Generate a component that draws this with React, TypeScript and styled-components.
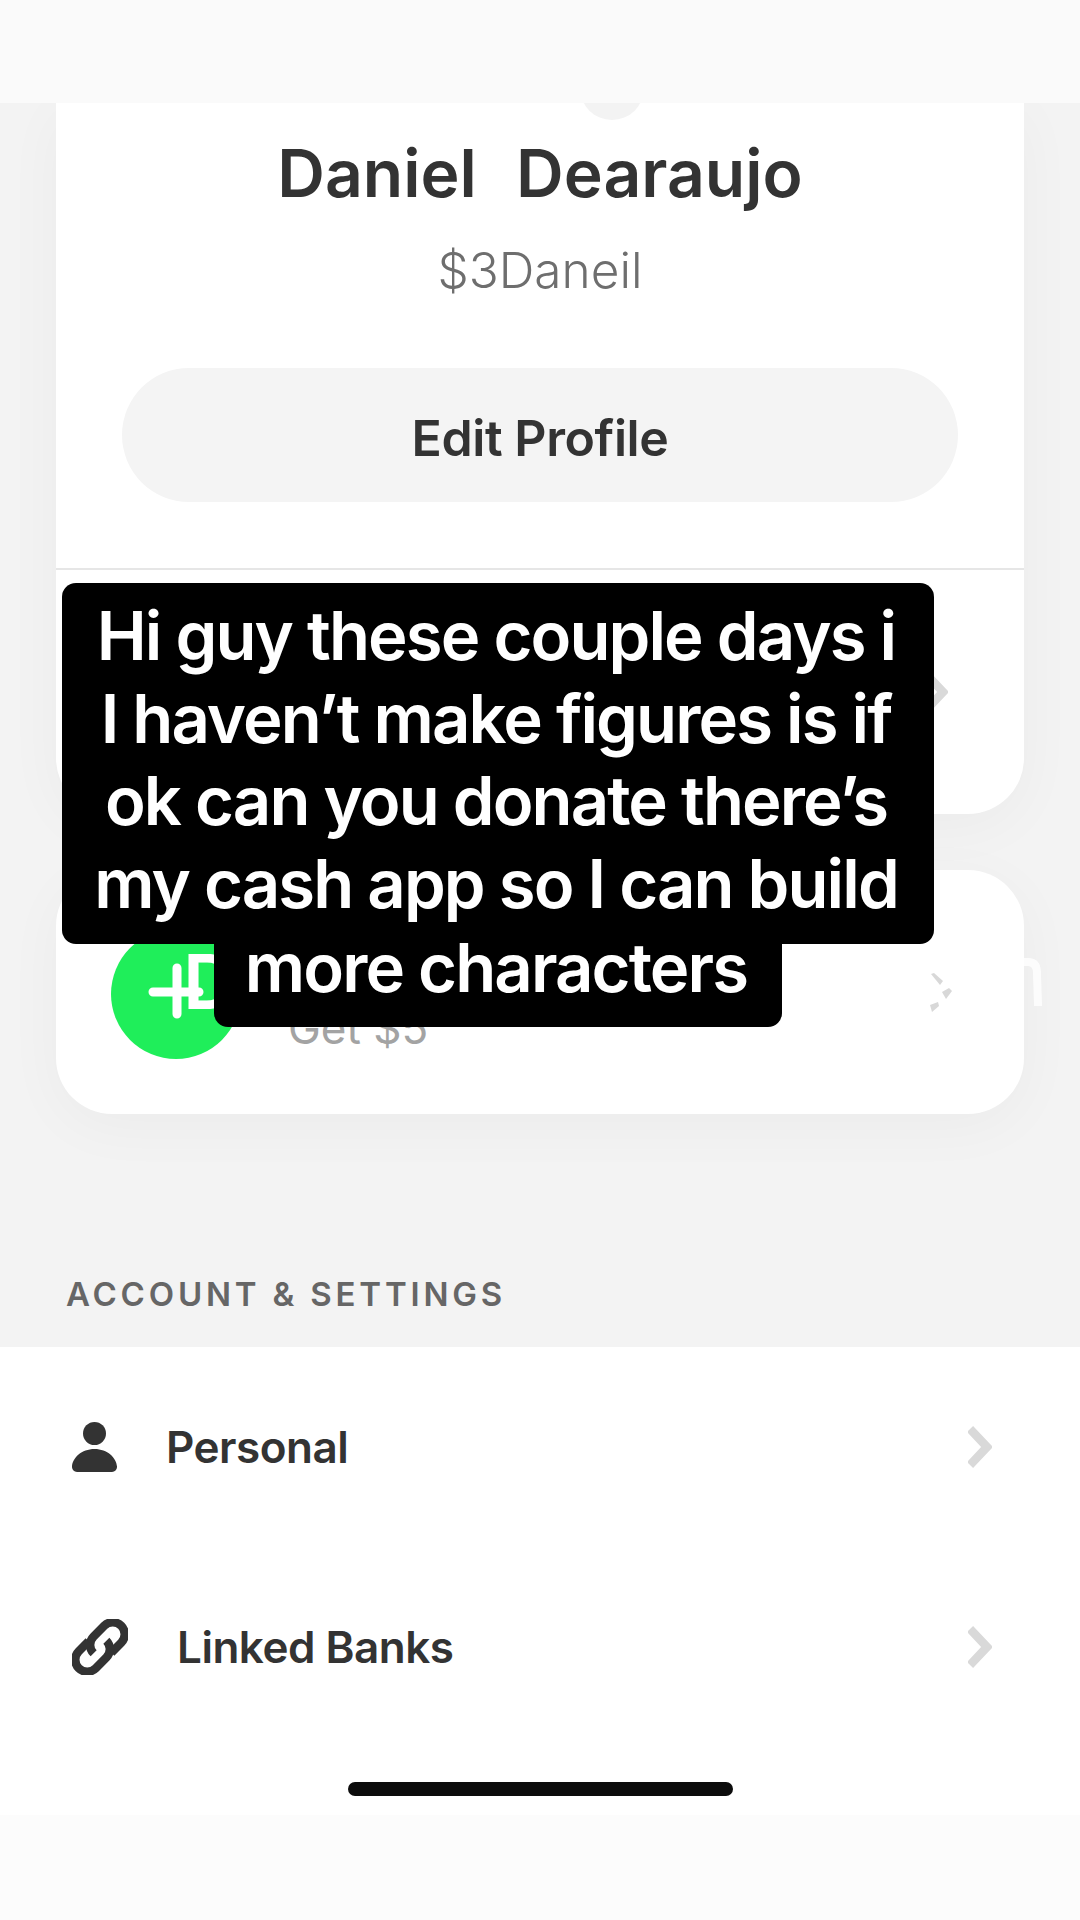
import * as React from 'react'
import styled, { createGlobalStyle } from 'styled-components'

const INK = '#333333'
const FONT = `Inter, "Liberation Sans", sans-serif`

const GlobalStyle = createGlobalStyle`
    html, body {
        margin: 0;
        padding: 0;
        background: #f3f3f3;
    }
    * {
        box-sizing: border-box;
    }
`

const Page = styled.div`
    position: relative;
    display: flex;
    flex-direction: column;
    width: 1080px;
    height: 1920px;
    overflow: hidden;
    background: #f3f3f3;
    font-family: ${FONT};
    color: ${INK};
`

const TopBar = styled.div`
    position: relative;
    z-index: 2;
    flex: none;
    height: 103px;
    background: #fafafa;
`

const Card = styled.div`
    position: relative;
    margin: 0 56px;
    background: #fff;
    box-shadow: 0 12px 60px rgba(0, 0, 0, 0.035);
`

const ProfileCard = styled(Card)`
    height: 711px;
    border-radius: 0 0 56px 56px;
`

const AvatarStub = styled.div`
    position: absolute;
    top: -47px;
    left: 524px;
    width: 64px;
    height: 64px;
    border-radius: 50%;
    background: #f3f3f3;
`

const ProfileHead = styled.div`
    display: flex;
    flex-direction: column;
    align-items: center;
    height: 467px;
    padding-top: 34px;
    border-bottom: 2px solid #e6e6e6;
`

const Name = styled.div`
    font-size: 66px;
    line-height: 72px;
    font-weight: 600;
    word-spacing: 3px;
    white-space: pre;
`

const Handle = styled.div`
    margin-top: 33px;
    font-size: 49.5px;
    line-height: 56px;
    font-weight: 300;
    color: #6e6e6e;
`

const EditButton = styled.div`
    display: flex;
    align-items: center;
    justify-content: center;
    width: 836px;
    height: 134px;
    margin-top: 70px;
    padding-top: 6px;
    border-radius: 67px;
    background: #f4f4f4;
    font-size: 50px;
    font-weight: 600;
    letter-spacing: -0.4px;
`

const ProfileRow = styled.div`
    display: flex;
    align-items: center;
    justify-content: flex-end;
    height: 244px;
    padding-right: 76px;
`

const InviteCard = styled(Card)`
    display: flex;
    flex: none;
    align-items: flex-start;
    height: 244px;
    margin-top: 56px;
    padding: 59px 0 0 55px;
    border-radius: 56px;
`

const GreenBadge = styled.div`
    position: relative;
    flex: none;
    width: 130px;
    height: 130px;
    border-radius: 50%;
    background: #1fee5a;
`

const BadgeLetter = styled.span`
    position: absolute;
    top: 6px;
    left: 72px;
    font-size: 76px;
    line-height: 92px;
    font-weight: 600;
    color: #fff;
`

const BadgePlus = styled.svg`
    position: absolute;
    top: 34px;
    left: 37px;
`

const InviteText = styled.div`
    margin: 75px 0 0 47px;
    font-size: 44px;
    line-height: 48px;
    color: #a3a3a3;
`

const InviteChevron = styled.svg`
    margin: 44px 72px 0 auto;
`

const GhostArc = styled.svg`
    position: absolute;
    top: 88px;
    left: 966px;
`

const SectionLabel = styled.div`
    flex: none;
    height: 233px;
    padding: 161px 0 0 66px;
    font-size: 33px;
    line-height: 38px;
    font-weight: 600;
    letter-spacing: 3.8px;
    color: #666;
`

const List = styled.div`
    flex: none;
    height: 468px;
    background: #fff;
`

const Row = styled.div<{ $gap: number }>`
    display: flex;
    align-items: center;
    height: 200px;
    padding: 0 88px 0 72px;
    gap: ${(p) => p.$gap}px;
`

const RowLabel = styled.div`
    flex: 1;
    font-size: 44px;
    font-weight: 600;
    letter-spacing: -0.5px;
`

const BottomBar = styled.div`
    flex: 1;
    background: #fcfcfc;
`

const HomeIndicator = styled.div`
    position: absolute;
    top: 1782px;
    left: 348px;
    width: 385px;
    height: 14px;
    border-radius: 7px;
    background: #0c0c0c;
`

const Captions = styled.div`
    position: absolute;
    z-index: 3;
    top: 583px;
    left: 62px;
    display: flex;
    flex-direction: column;
    align-items: center;
    width: 872px;
    color: #fff;
    font-size: 67px;
    line-height: 82.5px;
    font-weight: 560;
    letter-spacing: -1.9px;
    text-align: center;
    white-space: pre;
`

const CaptionMain = styled.div`
    width: 872px;
    height: 361px;
    padding: 12px 4px 0 0;
    background: #000;
    border-radius: 14px;
`

const CaptionTail = styled.div`
    width: 568px;
    height: 83px;
    padding-right: 4px;
    background: #000;
    border-radius: 0 0 14px 14px;
    line-height: 48px;
`

const PersonIcon = () => (
    <svg width="45" height="50" viewBox="0 0 45 50" fill={INK}>
        <circle cx="22.5" cy="11.5" r="11.5" />
        <path d="M22.5 27C9.5 27 0.5 36 0 44.5C-0.2 47.5 1.8 50 5 50H40C43.2 50 45.2 47.5 45 44.5C44.5 36 35.5 27 22.5 27Z" />
    </svg>
)

const LinkIcon = () => (
    <svg width="56" height="56" viewBox="0 0 56 56" fill="none" stroke={INK} strokeWidth="8.5">
        <g transform="translate(28 28) rotate(-45)">
            <path d="M4 12H18A12 12 0 0 0 18 -12H3A12 12 0 0 0 -9 0" />
            <path d="M-4 -12H-18A12 12 0 0 0 -18 12H-3A12 12 0 0 0 9 0" />
        </g>
    </svg>
)

const Chevron = () => (
    <svg width="24" height="42" viewBox="0 0 24 42" fill="none" stroke="#d9d9d9" strokeWidth="8.5">
        <path d="M2 3L19 21L2 39" />
    </svg>
)

export default function App() {
    return (
        <Page>
            <GlobalStyle />
            <TopBar />
            <ProfileCard>
                <AvatarStub />
                <ProfileHead>
                    <Name>{'Daniel  Dearaujo'}</Name>
                    <Handle>$3Daneil</Handle>
                    <EditButton>Edit Profile</EditButton>
                </ProfileHead>
                <ProfileRow>
                    <Chevron />
                </ProfileRow>
            </ProfileCard>
            <InviteCard>
                <GreenBadge>
                    <BadgeLetter>D</BadgeLetter>
                    <BadgePlus width="56" height="56" viewBox="0 0 56 56" stroke="#fff" strokeWidth="9" strokeLinecap="round">
                        <path d="M5 29H51M29 5V51" />
                    </BadgePlus>
                </GreenBadge>
                <InviteText>Get $5</InviteText>
                <InviteChevron width="24" height="40" viewBox="0 0 24 40" fill="#d8d8d8">
                    <path d="M3 1L6 0L15 8L12 12Z" />
                    <path d="M14 19L21 15L24 18L18 26Z" />
                    <path d="M2 32L10 29L11 33L4 39Z" />
                </InviteChevron>
                <GhostArc width="22" height="50" viewBox="0 0 22 50" fill="none" stroke="#fff" strokeWidth="8" opacity="0.85">
                    <path d="M0 4H6C13 4 15 9 15 15L16 48" />
                </GhostArc>
            </InviteCard>
            <SectionLabel>ACCOUNT &amp; SETTINGS</SectionLabel>
            <List>
                <Row $gap={49}>
                    <PersonIcon />
                    <RowLabel>Personal</RowLabel>
                    <Chevron />
                </Row>
                <Row $gap={49}>
                    <LinkIcon />
                    <RowLabel>Linked Banks</RowLabel>
                    <Chevron />
                </Row>
            </List>
            <BottomBar />
            <HomeIndicator />
            <Captions>
                <CaptionMain>
                    {'Hi guy these couple days i\nI haven\u2019t make figures is if\nok can you donate there\u2019s\nmy cash app so I can build'}
                </CaptionMain>
                <CaptionTail>more characters</CaptionTail>
            </Captions>
        </Page>
    )
}
